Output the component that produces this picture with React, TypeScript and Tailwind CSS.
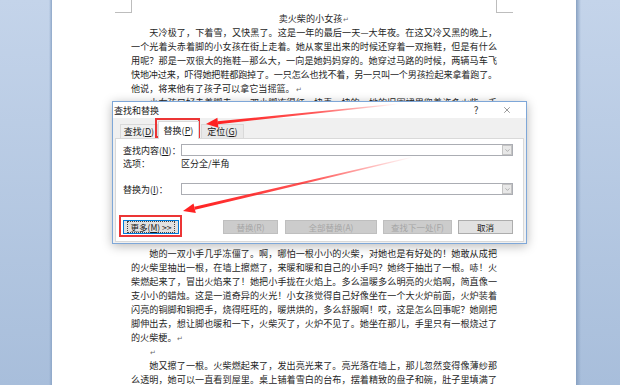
import { X, ChevronDown } from "lucide-react";

const topLines = [
  { t: "天冷极了，下着雪，又快黑了。这是一年的最后一天—大年夜。在这又冷又黑的晚上，", indent: true, full: true },
  { t: "一个光着头赤着脚的小女孩在街上走着。她从家里出来的时候还穿着一双拖鞋，但是有什么", full: true },
  { t: "用呢？那是一双很大的拖鞋—那么大，一向是她妈妈穿的。她穿过马路的时候，两辆马车飞", full: true },
  { t: "快地冲过来，吓得她把鞋都跑掉了。一只怎么也找不着，另一只叫一个男孩捡起来拿着跑了。", full: true, tight: true },
  { t: "他说，将来他有了孩子可以拿它当摇篮。", mark: true },
  { t: "小女孩只好赤着脚走，一双小脚冻得红一块青一块的。她的旧围裙里兜着许多火柴，手", indent: true, full: true },
];

const bottomLines = [
  { t: "她的一双小手几乎冻僵了。啊，哪怕一根小小的火柴，对她也是有好处的！她敢从成把", indent: true, full: true },
  { t: "的火柴里抽出一根，在墙上擦燃了，来暖和暖和自己的小手吗？她终于抽出了一根。哧！火", full: true },
  { t: "柴燃起来了，冒出火焰来了！她把小手拢在火焰上。多么温暖多么明亮的火焰啊，简直像一", full: true },
  { t: "支小小的蜡烛。这是一道奇异的火光！小女孩觉得自己好像坐在一个大火炉前面，火炉装着", full: true },
  { t: "闪亮的铜脚和铜把手，烧得旺旺的，暖烘烘的，多么舒服啊！哎，这是怎么回事呢？她刚把", full: true },
  { t: "脚伸出去，想让脚也暖和一下，火柴灭了，火炉不见了。她坐在那儿，手里只有一根烧过了", full: true },
  { t: "的火柴梗。", mark: true },
  { t: "", indent: true, mark: true },
  { t: "她又擦了一根。火柴燃起来了，发出亮光来了。亮光落在墙上，那儿忽然变得像薄纱那", indent: true, full: true },
  { t: "么透明，她可以一直看到屋里。桌上铺着雪白的台布，摆着精致的盘子和碗，肚子里填满了", full: true },
  { t: "苹果和梅子的烤鹅正冒着香气。更妙的是这只鹅从盘子里跳下来，背上插着刀和叉，摇摇摆", full: true },
];

type L = { t: string; indent?: boolean; full?: boolean; mark?: boolean; tight?: boolean };

function Mark() {
  return <span className="ml-[1px] text-[7px] text-[#6b6b6b]">↵</span>;
}

function Line({ t, indent, full, mark, tight }: L) {
  return (
    <div
      className={`h-[14px] leading-[14px] ${indent ? "pl-[18.3px]" : ""} ${full ? "text-justify [text-align-last:justify]" : ""} ${tight ? "tracking-[-0.2px]" : ""}`}
    >
      {t}
      {mark && <Mark />}
    </div>
  );
}

function Key({ label, k, tail }: { label: string; k: string; tail?: string }) {
  return (
    <span>
      {label}(<span className="underline">{k}</span>){tail}
    </span>
  );
}

function Combo() {
  return (
    <div className="flex h-[12px] w-[332px] justify-end border border-[#abadb3] bg-white">
      <div className="flex w-[10px] items-center justify-center border border-[#c4c4c4] bg-[#e8e8e8]">
        <ChevronDown size={7} strokeWidth={1.6} className="text-[#707070]" />
      </div>
    </div>
  );
}

function Dialog() {
  return (
    <div className="absolute left-[112px] top-[101px] flex h-[143px] w-[415px] flex-col border border-[#7ea7d8] bg-[#f0f0f0] text-[9px] leading-none text-[#1a1a1a] shadow-[0_2px_10px_rgba(0,0,0,0.28)]">
      <div className="flex h-[16px] items-center bg-white pl-[1px] pr-[14px]">
        <span>查找和替换</span>
        <span className="ml-auto w-[10px] text-center text-[10px] text-[#333]">?</span>
        <X size={10} strokeWidth={1.2} className="ml-[21px] text-[#333]" />
      </div>

      <div className="flex h-[20px] items-end pl-[7px]">
        <div className="flex h-[14px] w-[38px] items-center justify-center border border-b-0 border-[#d9d9d9] bg-[#f0f0f0]">
          <Key label="查找" k="D" />
        </div>
        <div className="relative z-10 -mb-px flex h-[18px] w-[41px] items-center justify-center border border-b-0 border-[#d9d9d9] bg-white">
          <Key label="替换" k="P" />
        </div>
        <div className="ml-[2px] flex h-[14px] w-[43px] items-center justify-center border border-b-0 border-[#d9d9d9] bg-[#e9e9e9]">
          <Key label="定位" k="G" />
        </div>
      </div>

      <div className="mx-[2px] mb-[1px] flex-1 border border-[#d9d9d9] bg-white pl-[7px]">
        <div className="mt-[5px] flex h-[12px] items-center">
          <div className="w-[58px]">
            <Key label="查找内容" k="N" tail="：" />
          </div>
          <Combo />
        </div>
        <div className="mt-[1px] flex h-[12px] items-center">
          <div className="w-[58px]">选项：</div>
          <div>区分全/半角</div>
        </div>
        <div className="mt-[14px] flex h-[12px] items-center">
          <div className="w-[58px]">
            <Key label="替换为" k="I" tail="：" />
          </div>
          <Combo />
        </div>

        <div className="mt-[25px] flex h-[14px] text-[8.5px]">
          <div className="flex w-[56px] items-center justify-center border border-[#0078d7] bg-[#e1e1e1]">
            <div className="border border-dotted border-[#444] px-[2px] py-[1px]">
              <Key label="更多" k="M" tail="  >>" />
            </div>
          </div>
          <div className="ml-[44px] flex w-[55px] items-center justify-center border border-[#bfbfbf] bg-[#cccccc] text-[#a6a6a6]">
            替换(R)
          </div>
          <div className="ml-[7px] flex w-[92px] items-center justify-center border border-[#bfbfbf] bg-[#cccccc] text-[#a6a6a6]">
            全部替换(A)
          </div>
          <div className="ml-[6px] flex w-[69px] items-center justify-center border border-[#bfbfbf] bg-[#cccccc] text-[#a6a6a6]">
            查找下一处(F)
          </div>
          <div className="ml-[6px] flex w-[55px] items-center justify-center border border-[#adadad] bg-[#e1e1e1]">
            取消
          </div>
        </div>
      </div>

      {/* red annotation boxes */}
      <div className="absolute left-[42px] top-[16px] h-[20px] w-[45px] border-2 border-[#ec3535]" />
      <div className="absolute left-[6px] top-[113px] h-[22px] w-[63px] border-2 border-[#ec3535]" />
    </div>
  );
}

function Arrows() {
  return (
    <svg className="pointer-events-none absolute inset-0" width="620" height="385" viewBox="0 0 620 385">
      <defs>
        <linearGradient id="a1" gradientUnits="userSpaceOnUse" x1="398" y1="104" x2="218" y2="123">
          <stop offset="0" stopColor="#f22" stopOpacity="0" />
          <stop offset="0.45" stopColor="#f22" stopOpacity="0.75" />
          <stop offset="1" stopColor="#f22" stopOpacity="1" />
        </linearGradient>
        <linearGradient id="a2" gradientUnits="userSpaceOnUse" x1="413" y1="157" x2="195" y2="208">
          <stop offset="0" stopColor="#f22" stopOpacity="0" />
          <stop offset="0.45" stopColor="#f22" stopOpacity="0.75" />
          <stop offset="1" stopColor="#f22" stopOpacity="1" />
        </linearGradient>
      </defs>
      <polygon points="397.9,103.5 217.7,121.2 218.1,124.2 398.1,104.5" fill="url(#a1)" />
      <polygon points="206,124 217.4,117.8 218.4,127.7" fill="#f22" />
      <polygon points="412.9,156.5 194.3,206.8 195,209.8 413.1,157.5" fill="url(#a2)" />
      <polygon points="183,211 193.5,203.4 195.8,213.1" fill="#f22" />
    </svg>
  );
}

export default function App() {
  return (
    <div className="relative flex h-[385px] w-[620px] overflow-hidden bg-gradient-to-b from-[#c4d4ea] to-[#a8bedb] font-['Noto_Sans_CJK_SC','Noto_Sans',sans-serif]">
      <div className="w-[49px]" />
      <div className="w-[3px] bg-gradient-to-r from-transparent to-[#8ea7c8]" />

      <div className="relative w-[524px] bg-white pl-[79px] pt-[11px] text-[9.1px] text-[#262626]">
        <div className="absolute left-[63px] top-0 h-[13px] w-[17px] border-b border-r border-[#bdbdbd]" />
        <div className="absolute left-[444px] top-0 h-[13px] w-[17px] border-b border-l border-[#bdbdbd]" />

        <div className="w-[366px]">
          <div className="h-[14px] text-center leading-[14px]">
            卖火柴的小女孩
            <Mark />
          </div>
          {topLines.map((l, i) => (
            <Line key={i} {...l} />
          ))}
          <div className="h-[137px]" />
          {bottomLines.map((l, i) => (
            <Line key={i} {...l} />
          ))}
        </div>
      </div>

      <div className="w-[5px] bg-gradient-to-r from-[#88a1c2] to-transparent" />

      <Dialog />
      <Arrows />
    </div>
  );
}
